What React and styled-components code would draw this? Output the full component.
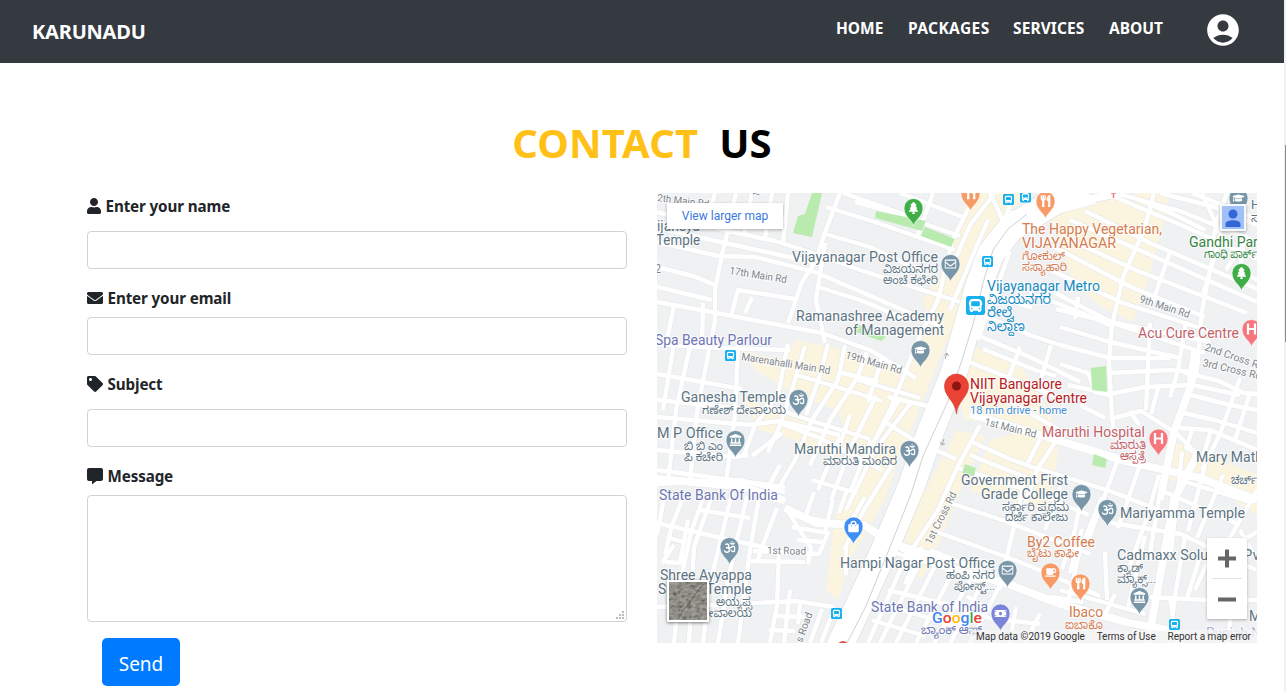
import React from "react";
import styled, { createGlobalStyle } from "styled-components";
import {
  FaUser, FaEnvelope, FaRegEnvelope, FaTag, FaCommentAlt, FaOm, FaGraduationCap,
  FaTree, FaUtensils, FaCoffee, FaLandmark, FaBus, FaShoppingBag, FaMoneyBill,
} from "react-icons/fa";
import { MdAccountCircle } from "react-icons/md";

const GlobalStyle = createGlobalStyle`
  *, *::before, *::after { box-sizing: border-box; }
  html, body { margin: 0; height: 100%; overflow: hidden; background: #fff; }
  body { font-family: "Noto Sans", "Open Sans", sans-serif; font-size: 16px; color: #212529; }
`;

const Page = styled.div`
  display: grid;
  grid-template-columns: 1284px 2px;
  height: 692px;
  overflow: hidden;
`;
const Content = styled.div`min-width: 0;`;
const ScrollTrack = styled.div`
  background: #f1f1f1;
  padding-top: 145px;
`;
const ScrollThumb = styled.div`
  height: 197px;
  margin-left: 1px;
  background: #8b8b8b;
`;

const Navbar = styled.header`
  display: flex;
  align-items: center;
  height: 63px;
  padding: 0 44px 0 32px;
  background: #343a40;
  color: #fff;
`;
const Brand = styled.div`
  font-weight: 700;
  font-size: 20px;
  line-height: 30px;
  letter-spacing: -0.2px;
`;
const NavLinks = styled.nav`
  display: flex;
  gap: 24px;
  margin: 0 40px 8px auto;
`;
const NavLink = styled.a`
  width: ${(p) => p.$width}px;
  color: #fff;
  font-weight: 700;
  font-size: 15.5px;
  line-height: 24px;
  white-space: nowrap;
  letter-spacing: ${(p) => p.$spacing || 0}px;
`;
const Avatar = styled(MdAccountCircle)`
  width: 38px;
  height: 38px;
  margin: 0 -2px 3px 0;
`;

const Title = styled.h1`
  display: flex;
  justify-content: center;
  gap: 21px;
  margin: 0;
  padding-top: 50px;
  height: 130px;
  font-size: 40px;
  line-height: 60px;
  font-weight: 700;
  color: #000;
`;
const TitleWord = styled.span`
  color: ${(p) => p.$color};
  letter-spacing: 0.15px;
`;

const Columns = styled.main`
  display: flex;
  align-items: flex-start;
  gap: 30px;
  padding-left: 87px;
`;
const Form = styled.form`
  display: flex;
  flex-direction: column;
  width: 540px;
  padding-top: 2px;
`;
const Field = styled.div`
  display: flex;
  flex-direction: column;
  gap: ${(p) => p.$gap}px;
  margin-bottom: ${(p) => p.$after || 18}px;
`;
const Label = styled.label`
  display: flex;
  align-items: center;
  gap: 4.5px;
  height: 24px;
  padding-bottom: 2px;
  font-size: 15.2px;
  line-height: 22px;
  font-weight: 700;
  letter-spacing: -0.12px;
  white-space: nowrap;
  svg { width: ${(p) => p.$icon || 16}px; height: 16px; }
`;
const Input = styled.input`
  width: 100%;
  height: 38px;
  border: 1px solid #ced4da;
  border-radius: 4px;
  padding: 6px 12px;
  font: inherit;
  outline: none;
`;
const MessageBox = styled.textarea`
  display: block;
  width: 100%;
  height: 127px;
  border: 1px solid #ced4da;
  border-radius: 4px;
  padding: 6px 12px;
  font: inherit;
  resize: none;
`;
const MessageArea = styled.div`
  position: relative;
`;
const ResizeGrip = styled.svg`
  position: absolute;
  right: 3px;
  bottom: 3px;
  width: 8px;
  height: 8px;
`;
const SendButton = styled.button`
  width: 78px;
  height: 48px;
  margin-left: 15px;
  padding: 3px 0 0;
  border: 0;
  border-radius: 5px;
  background: #007bff;
  color: #fff;
  font: 400 19px/30px "Noto Sans", sans-serif;
`;

const MapFrame = styled.section`
  position: relative;
  width: 600px;
  height: 450px;
  overflow: hidden;
`;
const MapDrawing = styled.svg`
  display: block;
  width: 600px;
  height: 450px;
  font-family: Roboto, "Noto Sans Kannada", sans-serif;
`;
const LargerMap = styled.a`
  position: absolute;
  left: 10px;
  top: 10px;
  width: 116px;
  height: 26px;
  background: #fff;
  box-shadow: 0 1px 3px rgba(0, 0, 0, 0.3);
  color: #3a78dc;
  font: 12px/26px Roboto, sans-serif;
  letter-spacing: 0.02px;
  text-align: center;
`;
const Person = styled.div`
  position: absolute;
  left: 563px;
  top: 11px;
  width: 26px;
  height: 27px;
  border: 2px solid #f6f8fc;
  background: #a1c0f8;
  box-shadow: 0 1px 3px rgba(0, 0, 0, 0.35);
  svg { display: block; }
`;
const ZoomControl = styled.div`
  position: absolute;
  left: 550px;
  top: 345px;
  width: 40px;
  height: 81px;
  background: #fff;
  border-radius: 1px;
  box-shadow: 0 1px 3px rgba(0, 0, 0, 0.3);
  svg { display: block; }
`;
const Satellite = styled.div`
  position: absolute;
  left: 10px;
  top: 387px;
  width: 42px;
  height: 42px;
  border: 2px solid #fff;
  box-shadow: 0 1px 3px rgba(0, 0, 0, 0.5);
  svg { display: block; }
`;
const Attribution = styled.footer`
  position: absolute;
  right: 0;
  bottom: 0;
  display: flex;
  justify-content: space-between;
  width: 287px;
  height: 13px;
  padding: 0 6px;
  background: rgba(245, 245, 245, 0.72);
  color: #333;
  font: 10px/13px Roboto, sans-serif;
  white-space: nowrap;
`;

const BEIGE = [
  "968,193 1030,193 1000,222 982,255 968,300 945,345 925,395 900,455 885,500 850,560 838,600 826,590 832,540 838,505 862,465 890,410 912,355 930,318 922,300 948,262 958,225",
  "1070,207 1140,193 1170,193 1160,235 1148,280 1133,322 1100,306 1072,280 1050,215",
  "970,345 1020,365 1040,395 1057,430 1055,450 1000,425 965,420 958,395",
  "957,430 985,436 965,480 940,540 922,580 898,556 920,500",
  "797,340 830,347 862,355 900,366 920,382 900,440 872,480 848,440 838,410 800,398 755,370 742,350 780,360",
  "1168,440 1210,455 1257,475 1257,515 1215,490 1160,478",
  "970,490 1010,500 1050,515 1060,435 1025,430 990,440",
  "740,395 770,410 858,440 835,460 795,440 760,430",
];

const PARKS = [
  "812,193 822,193 812,237 793,233 798,216 805,214",
  "876,211 926,221 922,231 875,218",
  "925,227 955,239 951,247 921,236",
  "1091,368 1106,366 1107,392 1092,390",
  "965,464 976,468 974,476 962,473",
  "1094,454 1107,459 1105,468 1092,465",
  "857,324 886,337 881,341 856,332",
];

/* Street centre lines, grouped by drawn width. */
const LANES = [
  "657,212 728,231 775,241 810,252 860,270 960,302", "736,193 728,230 723,250 715,290 715,320 711,345",
  "657,242 718,256 755,257 815,272 880,300 940,326", "657,267 693,276 715,285", "657,287 712,300",
  "657,302 722,314 758,321 822,333 870,350 916,378", "731,316 738,290 795,299", "752,297 745,313",
  "840,193 826,230 815,262 802,282 788,323", "788,193 783,243", "772,193 765,238", "715,193 709,215",
  "826,207 875,222 955,250", "822,233 870,247 915,268", "818,287 860,300 908,320", "825,243 816,300 825,343",
  "657,228 730,244 812,262", "703,303 702,345", "674,305 666,345", "752,193 744,235",
  "855,202 885,210 960,236", "843,193 920,220", "933,193 927,210 918,235", "900,193 965,218",
  "970,205 952,242 938,300 918,340 890,410 862,465", "995,193 970,225 955,260",
  "657,344 715,348 790,350", "657,374 742,389", "657,400 735,408", "657,417 750,425 778,421 840,435",
  "657,450 735,457 748,455", "657,484 740,480 785,492", "657,470 785,487", "738,345 735,415 726,482",
  "691,342 676,410 668,482", "710,345 697,412 690,480", "674,343 663,410", "788,344 778,395 755,425 744,455",
  "805,346 792,390 780,425 768,452", "797,375 850,391", "845,345 838,380 812,420 795,460 775,494",
  "828,344 820,375 806,415", "867,352 857,378 830,420 810,465", "839,372 878,382", "850,415 838,450",
  "777,422 820,438 882,470", "765,405 815,422 870,439", "782,433 752,456", "850,391 882,401",
  "882,359 868,402", "840,437 818,490", "871,440 851,490", "780,465 765,493", "812,480 857,493",
  "876,396 852,445 831,500", "910,404 875,450 846,510", "899,400 872,445", "892,465 864,510 844,550",
  "882,420 915,441 956,459", "888,397 945,410", "920,490 880,550", "858,380 920,398",
  "657,523 713,536 772,549", "665,493 657,535", "685,493 672,525 665,555", "704,496 691,532 680,584 674,643",
  "760,492 750,550 738,643", "747,496 728,580 718,643", "732,493 710,584 703,643", "713,493 694,547 689,643",
  "700,510 750,518", "665,562 680,563 688,520", "674,545 662,563", "667,537 686,543", "777,508 762,547 758,560",
  "786,508 811,548 808,564", "794,515 833,523", "792,527 828,533 819,554 753,551", "797,540 823,542",
  "750,561 805,562", "779,552 777,605 770,643", "657,607 718,605 795,601 834,607", "790,590 784,643",
  "776,616 805,617", "769,630 795,631", "822,609 810,643", "834,609 821,643", "800,604 798,624",
  "833,500 825,531", "847,490 839,513", "865,497 852,520", "814,492 806,515", "897,546 853,643",
  "910,548 868,643", "924,554 880,643", "938,560 896,643", "955,568 916,643", "895,553 942,567 980,582",
  "888,590 950,605 1005,623", "881,604 940,621 985,637", "872,620 925,636", "922,547 905,584",
  "930,550 982,571", "970,580 934,643", "982,584 950,643", "1000,585 970,643",
  "1105,193 1188,228 1257,259", "1085,211 1150,243 1257,289", "1070,220 1155,257 1257,302", "1070,240 1138,271 1247,313",
  "1054,247 1131,287 1205,317", "1050,270 1123,303 1228,337", "1040,285 1115,324 1205,353", "1030,293 1082,313 1112,326",
  "1115,193 1180,211 1257,242", "1160,193 1215,207 1257,225", "1192,193 1257,219", "1140,200 1175,215 1205,230",
  "1154,193 1144,230 1123,277 1112,325 1109,360 1112,419", "1202,193 1221,235 1211,265 1202,311 1197,370 1177,428",
  "1244,240 1240,270 1257,280", "1227,193 1218,218 1210,252", "1217,249 1202,297", "1247,235 1226,270",
  "1186,322 1178,370 1170,397", "1170,252 1152,304", "1078,297 1075,319", "1150,323 1146,410",
  "1056,309 1105,321 1210,342", "1060,327 1110,342 1180,358", "1060,345 1110,358 1170,358", "1060,364 1088,373 1095,392 1110,395",
  "1068,385 1110,394 1145,387 1192,385 1240,395", "1111,373 1169,370 1197,372", "1183,372 1219,381 1244,393 1257,394",
  "1191,395 1230,405 1257,410", "1183,413 1215,420 1257,433", "1180,428 1210,430 1257,450",
  "1110,419 1141,411 1176,433 1198,455", "1080,405 1105,418", "1113,418 1112,438", "1130,411 1139,425", "1159,385 1151,414",
  "1192,430 1186,448 1195,452", "1240,378 1220,434 1202,470", "1211,430 1202,460", "1250,393 1235,440",
  "990,193 1005,225", "1010,205 1000,231", "988,220 975,250 950,310", "1010,251 978,340",
  "977,335 1030,357 1080,382", "983,315 1030,335 1060,345", "983,349 1035,370 1056,376", "990,294 1032,308",
  "969,362 1020,382 1060,398", "1020,347 1009,377", "1051,345 1039,386", "1008,400 1059,430",
  "980,425 958,466 938,510 913,548", "972,442 1010,459 1040,470", "970,455 1038,482", "1063,430 1037,470 1023,510",
  "1040,439 1028,463", "1040,469 1110,491 1174,516", "958,468 1030,491 1089,515", "950,503 1005,521 1090,554",
  "937,532 1020,562 1100,596", "1025,480 999,590", "1060,487 1045,530", "1082,493 1075,530 1062,569",
  "1102,497 1080,550 1066,610", "1117,462 1088,541", "1140,465 1118,528", "1159,475 1146,520 1130,565",
  "1169,450 1160,493 1149,560", "1182,452 1177,500 1171,552", "1105,522 1181,534 1256,570",
  "1180,480 1250,502", "1160,490 1238,524", "1205,465 1188,531", "1223,475 1197,538", "1257,490 1226,545",
  "1185,537 1176,590 1169,643", "1145,536 1128,607", "1105,552 1107,600", "1082,529 1070,573", "1150,597 1207,600 1257,600",
  "1199,560 1187,598", "1215,545 1195,590", "1225,552 1209,600", "1170,598 1177,643", "1115,594 1102,620",
  "1060,590 1145,614", "1016,607 1010,643", "1006,620 1040,624", "1040,614 1025,643", "1080,626 1073,643",
  "1257,532 1243,540", "1232,600 1228,643", "1240,530 1257,560",
  "967,596 990,611", "885,540 920,550 957,562", "846,545 846,575", "1051,597 1083,602", "1057,500 1049,522",
];
const ARTERIES = [
  "1010,215 1060,205 1120,193", "1008,240 1038,215 1095,200",
  "785,508 816,523 864,525 885,539 907,550 960,571 1008,584 1060,604 1130,623 1180,632",
  "657,479 740,486 785,501", "970,414 1020,429 1090,450 1125,461 1200,478 1257,500",
  "1197,455 1174,500 1163,560 1148,643", "1195,350 1190,388 1174,432 1160,500",
];
const HIGHWAY = "835,656 852,620 873,575 892,532 911,487 930,433 953,376 966,330 979,285 991,253 1011,228 1052,203 1085,186";
const HIGHWAY_EDGE = "847,643 866,606 894,537 911,494 923,456 948,401 962,360 974,321 983,283 993,250 1008,229 1027,214";

const SLATE = "#5d7482";
const INDIGO = "#6d76b2";
const ORANGE = "#d57c50";
const ROSE = "#c36169";
const SKY = "#168ac1";
const RED = "#b6201f";
const GREEN = "#368545";
const ROAD = "#7d858b";

/* text, x, baseline, drawn width, size, colour, rotation */
const LABELS = [
  ["2th Main Rd", 657, 201, 52, 10, ROAD, 7],
  ["17th Main Rd", 729, 274, 58, 10.5, ROAD, 9],
  ["Marenahalli Main Rd", 741, 360, 90, 10.5, ROAD, 9],
  ["19th Main Rd", 845, 358, 58, 10.5, ROAD, 16],
  ["9th Main Rd", 1139, 302, 52, 10.5, ROAD, 18],
  ["2nd Cross Rd", 1204, 350, 62, 10.5, ROAD, 19],
  ["3rd Cross Rd", 1202, 366, 60, 10.5, ROAD, 13],
  ["1st Main Rd", 984, 425, 53, 10.5, ROAD, 14],
  ["1st Cross Rd", 931, 545, 57, 10.5, ROAD, -63],
  ["1st Road", 767, 554, 39, 10.5, ROAD, 1],
  ["s Road", 802, 643, 31, 10.5, ROAD, -70],
  ["15", 759, 197, 8, 10, ROAD, -75],
  ["ijaneya", 657, 231, 43, 14, SLATE],
  ["Temple", 656, 245, 44, 14, SLATE],
  ["2", 655, 273, 6, 12, ROAD],
  ["Vijayanagar Post Office", 792, 262, 146, 14, SLATE],
  ["ವಿಜಯನಗರ", 883, 273, 55, 11.5, SLATE],
  ["ಅಂಚೆ ಕಛೇರಿ", 883, 284, 55, 11.5, SLATE],
  ["Ramanashree Academy", 796, 321, 148, 14, SLATE],
  ["of Management", 845, 335, 99, 14, SLATE],
  ["Spa Beauty Parlour", 655, 345, 117, 14, INDIGO],
  ["Ganesha Temple", 681, 402, 105, 14, SLATE],
  ["ಗಣೇಶ್ ದೇವಾಲಯ", 702, 414, 84, 11.5, SLATE],
  ["M P Office", 657, 438, 66, 14, SLATE],
  ["ಬಿ ಬಿ ಎಂ", 684, 450, 39, 11.5, SLATE],
  ["ಪಿ ಕಚೇರಿ", 684, 461, 39, 11.5, SLATE],
  ["Maruthi Mandira", 794, 454, 102, 14, SLATE],
  ["ಮಾರುತಿ ಮಂದಿರ", 823, 465, 74, 11.5, SLATE],
  ["State Bank Of India", 659, 500, 119, 14, INDIGO],
  ["Shree Ayyappa", 660, 580, 92, 14, SLATE],
  ["Swamy Temple", 658, 594, 94, 14, SLATE],
  ["ಅಯ್ಯಪ್ಪ", 716, 606, 36, 11.5, SLATE],
  ["ದೇವಾಲಯ", 700, 617, 52, 11.5, SLATE],
  ["The Happy Vegetarian,", 1022, 234, 140, 14, ORANGE],
  ["VIJAYANAGAR", 1022, 248, 94, 14, ORANGE],
  ["ಗೋಕುಲ್", 1022, 260, 43, 11.5, ORANGE],
  ["ಸಸ್ಯಾಹಾರಿ", 1022, 271, 45, 11.5, ORANGE],
  ["Vijayanagar Metro", 987, 291, 113, 14, SKY],
  ["ವಿಜಯನಗರ", 987, 304, 64, 13.5, SKY],
  ["ರೇಲ್ವೆ", 987, 317, 27, 13.5, SKY],
  ["ನಿಲ್ದಾಣ", 987, 331, 38, 13.5, SKY],
  ["Gandhi Park", 1189, 247, 76, 14, GREEN],
  ["ಗಾಂಧಿ ಪಾರ್ಕ್", 1204, 258, 53, 11.5, GREEN],
  ["Acu Cure Centre", 1138, 338, 101, 14, ROSE],
  ["NIIT Bangalore", 970, 389, 92, 14, RED],
  ["Vijayanagar Centre", 970, 403, 117, 14, RED],
  ["18 min drive - home", 970, 414, 97, 11, "#438fd6"],
  ["Maruthi Hospital", 1042, 437, 103, 14, ROSE],
  ["ಮಾರುತಿ", 1110, 449, 36, 11.5, ROSE],
  ["ಆಸ್ಪತ್ರೆ", 1120, 460, 26, 11.5, ROSE],
  ["Mary Math", 1196, 462, 67, 14, SLATE],
  ["ಚರ್ಚ್", 1231, 484, 26, 11.5, SLATE],
  ["Government First", 961, 485, 107, 14, SLATE],
  ["Grade College", 981, 499, 87, 14, SLATE],
  ["ಸರ್ಕಾರಿ ಪ್ರಥಮ", 1002, 511, 67, 11.5, SLATE],
  ["ದರ್ಜೆ ಕಾಲೇಜು", 1005, 521, 63, 11.5, SLATE],
  ["Mariyamma Temple", 1120, 518, 125, 14, SLATE],
  ["By2 Coffee", 1027, 547, 68, 14, ORANGE],
  ["ಬೈಟು ಕಾಫೀ", 1027, 557, 52, 11.5, ORANGE],
  ["Hampi Nagar Post Office", 840, 568, 155, 14, SLATE],
  ["ಹಂಪಿ ನಗರ", 946, 579, 49, 11.5, SLATE],
  ["ಪೋಸ್ಟ್...", 954, 590, 41, 11.5, SLATE],
  ["Cadmaxx Solutions Pvt", 1117, 560, 147, 14, SLATE],
  ["ಕ್ಯಾಡ್", 1117, 572, 26, 11.5, SLATE],
  ["ಮ್ಯಾಕ್ಸ್...", 1117, 583, 39, 11.5, SLATE],
  ["State Bank of India", 871, 612, 117, 14, INDIGO],
  ["ಬ್ಯಾಂಕ್ ಆಫ್", 921, 634, 61, 11.5, INDIGO],
  ["Ibaco", 1069, 617, 34, 14, ORANGE],
  ["ಐಬಾಕೊ", 1065, 629, 38, 11.5, ORANGE],
  ["Punjab N", 1206, 638, 55, 14, "#b0b4d2"],
  ["M", 1249, 621, 12, 14, SLATE],
  ["H", 1251, 209, 9, 12, SLATE],
  ["ಸ", 1251, 222, 8, 11.5, SLATE],
];

const PIN_SLATE = "#7896a8";
/* centre x, centre y, colour, glyph */
const PINS = [
  [913.5, 208, "#3fae49", FaTree],
  [1241.5, 273, "#3fae49", FaTree],
  [950.5, 264, PIN_SLATE, FaRegEnvelope],
  [920.5, 350, PIN_SLATE, FaGraduationCap],
  [798.5, 399, PIN_SLATE, FaOm],
  [735.5, 440, PIN_SLATE, FaLandmark],
  [909.5, 450, PIN_SLATE, FaOm],
  [729.5, 547, PIN_SLATE, FaOm],
  [853.5, 526.5, "#3f8ef4", FaShoppingBag],
  [1045.5, 201, "#f79a66", FaUtensils],
  [970.5, 193.5, "#f79a66", FaUtensils],
  [1238.5, 198, PIN_SLATE, FaGraduationCap],
  [1251.5, 329, "#f5777d", null],
  [1158.5, 438.5, "#f5777d", null],
  [1081.5, 494, PIN_SLATE, FaGraduationCap],
  [1107.5, 509, PIN_SLATE, FaOm],
  [1007.5, 570, PIN_SLATE, FaRegEnvelope],
  [1050.5, 572.5, "#f79a66", FaCoffee],
  [1080.5, 583.5, "#f79a66", FaUtensils],
  [1139.5, 597, PIN_SLATE, FaLandmark],
  [1000.5, 613.5, "#7b84d8", FaMoneyBill],
];
const STATIONS = [[730.5, 355.5], [836.5, 613.5], [987.5, 261.5], [1008.5, 199.5], [1025.5, 197], [1174.5, 624.5]];

function Pin({ x, y, color, glyph: Glyph }) {
  return (
    <g>
      <path
        d={`M${x} ${y + 18}C${x - 1} ${y + 12} ${x - 9.5} ${y + 9} ${x - 9.5} ${y}A9.5 9.5 0 0 1 ${x + 9.5} ${y}C${x + 9.5} ${y + 9} ${x + 1} ${y + 12} ${x} ${y + 18}Z`}
        fill={color}
        stroke="#fff"
        strokeOpacity=".75"
        strokeWidth=".8"
      />
      {Glyph ? (
        <Glyph x={x - 6} y={y - 6} size={12} color="#fff" />
      ) : (
        <path d={`M${x - 3.5} ${y - 5.5}v11M${x + 3.5} ${y - 5.5}v11M${x - 4} ${y}h8`} stroke="#fff" strokeWidth="2.2" />
      )}
    </g>
  );
}

function Station({ x, y, size = 11 }) {
  return (
    <g>
      <rect x={x - size / 2} y={y - size / 2} width={size} height={size} rx={size / 7} fill="#17b0ee" />
      <FaBus x={x - size * 0.36} y={y - size * 0.36} size={size * 0.72} color="#fff" />
    </g>
  );
}

function Streets() {
  return (
    <g fill="none" strokeLinejoin="round">
      {LANES.map((p) => <polyline key={p} points={p} stroke="#e6e8ea" strokeWidth="5.6" />)}
      {ARTERIES.map((p) => <polyline key={p} points={p} stroke="#e6e8ea" strokeWidth="9" />)}
      <polyline points={HIGHWAY} stroke="#e0e2e4" strokeWidth="28" />
      {LANES.map((p) => <polyline key={p} points={p} stroke="#fff" strokeWidth="4.4" />)}
      {ARTERIES.map((p) => <polyline key={p} points={p} stroke="#fff" strokeWidth="7.8" />)}
      <polyline points={HIGHWAY} stroke="#fff" strokeWidth="26.5" />
      <polyline points={HIGHWAY_EDGE} stroke="#cfd1d3" strokeWidth="1" />
      <path d="M945 359l2-6m-2.5 2l2.5-2 1.5 3M944 439l-2 6m-1.5-3l1.5 3 3-1.5" stroke="#a8abae" />
    </g>
  );
}

function StreetMap() {
  return (
    <MapDrawing viewBox="657 193 600 450">
      <rect x="657" y="193" width="600" height="450" fill="#f0f1f3" />
      {BEIGE.map((p) => <polygon key={p} points={p} fill="#fbf4df" />)}
      <Streets />
      {PARKS.map((p) => <polygon key={p} points={p} fill="#b9eaae" />)}
      {LABELS.map(([text, x, y, width, size, color, angle]) => (
        <text
          key={`${text}${x}${y}`}
          x={x}
          y={y}
          fontSize={size}
          fill={color}
          textLength={width}
          lengthAdjust="spacingAndGlyphs"
          transform={angle ? `rotate(${angle} ${x} ${y})` : undefined}
          stroke="#fff"
          strokeOpacity=".8"
          strokeWidth="2"
          paintOrder="stroke"
        >
          {text}
        </text>
      ))}
      {PINS.map(([x, y, color, glyph]) => <Pin key={`${x}-${y}`} x={x} y={y} color={color} glyph={glyph} />)}
      {STATIONS.map(([x, y]) => <Station key={`${x}-${y}`} x={x} y={y} />)}
      <Station x={975.5} y={305.5} size={19} />
      <path d="M956.5 414C955.5 401 944.5 397 944.5 386a12 12 0 0 1 24 0C968.5 397 957.5 401 956.5 414Z" fill="#ea4335" stroke="#d23a2d" strokeWidth=".6" />
      <circle cx="956.5" cy="386" r="4.5" fill="#8c1510" />
      <circle cx="843" cy="647" r="6" fill="#e0554d" />
      <path d="M1111 193h5M1113.5 193v5" stroke="#f07c7c" strokeWidth="1.5" />
      <text x="932" y="622.5" fontSize="15.5" fontWeight="500" textLength="50" lengthAdjust="spacingAndGlyphs" stroke="#fff" strokeWidth="2" paintOrder="stroke"><tspan fill="#4285f4">G</tspan><tspan fill="#ea4335">o</tspan><tspan fill="#fbbc05">o</tspan><tspan fill="#4285f4">g</tspan><tspan fill="#34a853">l</tspan><tspan fill="#ea4335">e</tspan></text>
    </MapDrawing>
  );
}

function SatelliteTexture() {
  return (
    <svg width="38" height="38">
      <filter id="terrain">
        <feTurbulence type="fractalNoise" baseFrequency=".22 .3" numOctaves="4" seed="8" />
        <feColorMatrix values=".7 0 0 0 -.08  .7 0 0 0 -.08  .7 0 0 0 -.1  0 0 0 0 1" />
      </filter>
      <rect width="38" height="38" fill="#8f8d84" />
      <rect width="38" height="38" filter="url(#terrain)" opacity=".55" />
      <path d="M35 2C26 10 24 18 18 24S12 33 9 37" fill="none" stroke="#4c4d47" strokeOpacity=".6" />
    </svg>
  );
}

export default function App() {
  return (
    <Page>
      <GlobalStyle />
      <Content>
        <Navbar>
          <Brand>KARUNADU</Brand>
          <NavLinks>
            <NavLink $width={48}>HOME</NavLink>
            <NavLink $width={81} $spacing={0.4}>PACKAGES</NavLink>
            <NavLink $width={72} $spacing={0.1}>SERVICES</NavLink>
            <NavLink $width={55}>ABOUT</NavLink>
          </NavLinks>
          <Avatar />
        </Navbar>
        <Title>
          <TitleWord $color="#ffc117">CONTACT</TitleWord>
          <TitleWord $color="#000">US</TitleWord>
        </Title>
        <Columns>
          <Form>
            <Field $gap={12}>
              <Label htmlFor="name" $icon={14}><FaUser />Enter your name</Label>
              <Input id="name" />
            </Field>
            <Field $gap={6}>
              <Label htmlFor="email"><FaEnvelope />Enter your email</Label>
              <Input id="email" />
            </Field>
            <Field $gap={12}>
              <Label htmlFor="subject"><FaTag />Subject</Label>
              <Input id="subject" />
            </Field>
            <Field $gap={6} $after={16}>
              <Label htmlFor="message"><FaCommentAlt />Message</Label>
              <MessageArea>
                <MessageBox id="message" />
                <ResizeGrip viewBox="0 0 8 8" fill="#bcbcbc">
                  <path d="M6 0h2v2H6zM3 3h2v2H3zM6 3h2v2H6zM0 6h2v2H0zM3 6h2v2H3zM6 6h2v2H6z" />
                </ResizeGrip>
              </MessageArea>
            </Field>
            <SendButton type="button">Send</SendButton>
          </Form>
          <MapFrame>
            <StreetMap />
            <LargerMap>View larger map</LargerMap>
            <Person>
              <svg width="22" height="23" fill="#3467d6">
                <circle cx="11" cy="8" r="4.5" />
                <path d="M3.500 21v-3c0-5 15-5 15 0v3z" />
              </svg>
            </Person>
            <Satellite><SatelliteTexture /></Satellite>
            <ZoomControl>
              <svg width="40" height="81">
                <path d="M11 20.5h18M20 11.5v18M11 61.5h18" stroke="#666" strokeWidth="4" />
                <path d="M5 40.5h30" stroke="#e2e2e2" />
              </svg>
            </ZoomControl>
            <Attribution>
              <span>Map data ©2019 Google</span>
              <span>Terms of Use</span>
              <span>Report a map error</span>
            </Attribution>
          </MapFrame>
        </Columns>
      </Content>
      <ScrollTrack><ScrollThumb /></ScrollTrack>
    </Page>
  );
}
